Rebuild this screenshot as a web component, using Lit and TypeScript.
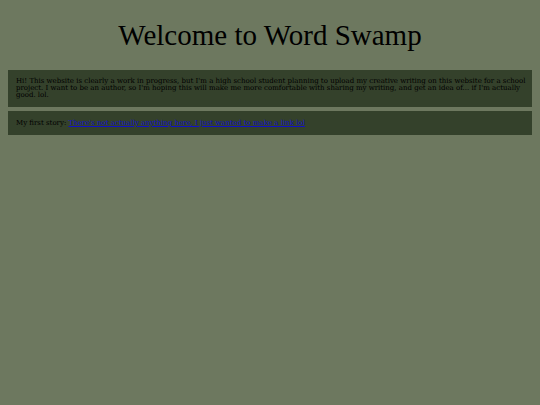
import { LitElement, html, css } from "lit";
import { customElement } from "lit/decorators.js";

@customElement("app-root")
export class AppRoot extends LitElement {
  static styles = css`
    :host {
      display: block;
      box-sizing: border-box;
      min-height: 100vh;
      padding: 16px 8px;
      background: #6d785f;
      color: #000;
      font: 7px/7px "DejaVu Serif", serif;
    }
    .title {
      margin: 0 0 16px;
      font: 400 29px/38px "Liberation Serif", serif;
      text-align: center;
    }
    .panels {
      display: grid;
      gap: 4px;
    }
    .panel {
      padding: 8px 4px 8px 8px;
      background: #34412b;
    }
    .text {
      margin: 0;
    }
    .story {
      line-height: 8px;
    }
    .link {
      color: #1010c8;
      text-decoration: underline;
    }
  `;

  render() {
    return html`
      <main>
        <h1 class="title">Welcome to Word Swamp</h1>
        <div class="panels">
          <section class="panel">
            <p class="text">
              Hi! This website is clearly a work in progress, but I'm a high school student planning to upload my creative writing on this website for a school project. I want to be an author, so I'm hoping this will make me more comfortable with sharing my writing, and get an idea of... if I'm actually good. lol.
            </p>
          </section>
          <section class="panel">
            <p class="text story">
              My first story:
              <a class="link" href="#story">There's not actually anything here, I just wanted to make a link lol</a>
            </p>
          </section>
        </div>
      </main>
    `;
  }
}
